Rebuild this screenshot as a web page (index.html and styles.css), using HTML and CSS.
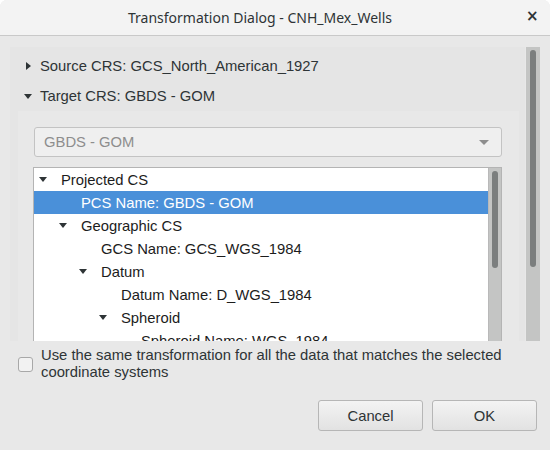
FILE: index.html
```html
<!DOCTYPE html>
<html>
<head>
<meta charset="utf-8">
<link rel="stylesheet" href="styles.css">
</head>
<body>
<div class="window">
  <div class="titlebar">
    <div class="title">Transformation Dialog - CNH_Mex_Wells</div>
    <div class="close">×</div>
  </div>
  <div class="scrollarea">
    <div class="panel">
      <div class="crs-row"><span class="tri-right"></span><span class="crs-label">Source CRS: GCS_North_American_1927</span></div>
      <div class="crs-row"><span class="tri-down"></span><span class="crs-label">Target CRS: GBDS - GOM</span></div>
      <div class="inner">
        <div class="combo"><span class="combo-text">GBDS - GOM</span><span class="combo-arrow"></span></div>
        <div class="tree">
          <div class="tree-rows">
            <div class="row l0"><span class="slot"><span class="tarrow"></span></span>Projected CS</div>
            <div class="row l1 selected"><span class="slot"></span>PCS Name: GBDS - GOM</div>
            <div class="row l1"><span class="slot"><span class="tarrow"></span></span>Geographic CS</div>
            <div class="row l2"><span class="slot"></span>GCS Name: GCS_WGS_1984</div>
            <div class="row l2"><span class="slot"><span class="tarrow"></span></span>Datum</div>
            <div class="row l3"><span class="slot"></span>Datum Name: D_WGS_1984</div>
            <div class="row l3"><span class="slot"><span class="tarrow"></span></span>Spheroid</div>
            <div class="row l4"><span class="slot"></span>Spheroid Name: WGS_1984</div>
          </div>
          <div class="tree-scroll"><div class="handle tree-handle"></div></div>
        </div>
      </div>
    </div>
    <div class="outer-scroll"><div class="handle outer-handle"></div></div>
  </div>
  <div class="check-row">
    <span class="checkbox"></span>
    <span class="check-label">Use the same transformation for all the data that matches the selected coordinate systems</span>
  </div>
  <div class="buttons">
    <button class="btn">Cancel</button>
    <button class="btn">OK</button>
  </div>
</div>
</body>
</html>
```

FILE: styles.css
```css
html, body {
  margin: 0;
  padding: 0;
  background: #ffffff;
}
.window {
  width: 550px;
  height: 450px;
  background: #e8e8e8;
  border-radius: 7px 7px 0 0;
  overflow: hidden;
  font-family: "Liberation Sans", Arial, sans-serif;
  font-size: 14.8px;
  color: #2e3436;
}
.titlebar {
  height: 35px;
  border-bottom: 1px solid #c9c9c9;
  background: #f3f3f3;
  display: flex;
  align-items: center;
  position: relative;
}
.title {
  font-family: "Noto Sans", sans-serif;
  font-size: 14px;
  color: #2e3436;
  margin-left: 128px;
}
.close {
  position: absolute;
  left: 526px;
  top: 7px;
  font-family: "DejaVu Sans", sans-serif;
  font-weight: bold;
  font-size: 15px;
  color: #2e3436;
}
.scrollarea {
  height: 305px;
  display: flex;
  padding: 11px 10px 0 10px;
  box-sizing: border-box;
  overflow: hidden;
}
.panel {
  flex: 1;
  background: #e5e5e5;
  padding-top: 4px;
  height: 400px;
}
.crs-row {
  height: 30px;
  display: flex;
  align-items: center;
  padding-left: 14px;
}
.tri-right {
  width: 0;
  height: 0;
  border-top: 4.5px solid transparent;
  border-bottom: 4.5px solid transparent;
  border-left: 5px solid #2e3436;
  margin-left: 2px;
  margin-right: 9px;
}
.tri-down {
  width: 0;
  height: 0;
  border-left: 4px solid transparent;
  border-right: 4px solid transparent;
  border-top: 5px solid #2e3436;
  margin-right: 8px;
}
.inner {
  margin: 0 6px 0 8px;
  background: #e8e8e8;
  padding: 16px 17px 0 15px;
  height: 400px;
}
.combo {
  height: 28px;
  margin-left: 1px;
  border: 1px solid #c3c3c3;
  border-radius: 3px;
  background: #efefef;
  display: flex;
  align-items: center;
  justify-content: space-between;
  padding: 0 12px 0 9px;
}
.combo-text {
  color: #8d8d8d;
}
.combo-arrow {
  width: 0;
  height: 0;
  border-left: 5px solid transparent;
  border-right: 5px solid transparent;
  border-top: 5px solid #8d8d8d;
}
.tree {
  margin-top: 10px;
  border: 1px solid #b4b4b4;
  background: #ffffff;
  display: flex;
  height: 240px;
  color: #1c1c1c;
}
.tree-rows {
  flex: 1;
}
.row {
  height: 23px;
  display: flex;
  align-items: center;
  white-space: nowrap;
}
.row.selected {
  background: #4a90d9;
  color: #ffffff;
}
.slot {
  width: 22px;
  display: flex;
  align-items: center;
}
.tarrow {
  width: 0;
  height: 0;
  border-left: 4.5px solid transparent;
  border-right: 4.5px solid transparent;
  border-top: 5px solid #2e3436;
}
.l0 { padding-left: 5px; }
.l1 { padding-left: 25px; }
.l2 { padding-left: 45px; }
.l3 { padding-left: 65px; }
.l4 { padding-left: 85px; }
.tree-scroll {
  width: 12px;
  background: #c4c5c4;
  border-left: 1px solid #b9b9b9;
  position: relative;
}
.handle {
  position: absolute;
  width: 6px;
  background: #7b7e7e;
  border-radius: 3px;
}
.tree-handle {
  left: 3px;
  top: 3px;
  height: 97px;
}
.outer-scroll {
  width: 14px;
  margin-left: 1px;
  background: #c4c5c4;
  position: relative;
  height: 400px;
}
.outer-handle {
  left: 4px;
  top: 3px;
  height: 217px;
}
.check-row {
  display: flex;
  align-items: flex-start;
  padding: 6px 20px 0 18px;
  line-height: 17px;
}
.checkbox {
  width: 13px;
  height: 13px;
  border: 1px solid #a8a8a8;
  border-radius: 3px;
  background: #f2f2f2;
  margin-top: 10px;
  margin-right: 8px;
  flex: none;
}
.check-label {
  color: #2e3436;
}
.buttons {
  display: flex;
  justify-content: flex-end;
  gap: 9px;
  padding: 19px 13px 0 0;
}
.btn {
  width: 105px;
  height: 31px;
  border: 1px solid #b6b6b6;
  border-radius: 3px;
  background: linear-gradient(#f3f3f3, #e2e2e2);
  font-family: "Liberation Sans", Arial, sans-serif;
  font-size: 14.8px;
  color: #2e3436;
  padding: 0;
}
```
